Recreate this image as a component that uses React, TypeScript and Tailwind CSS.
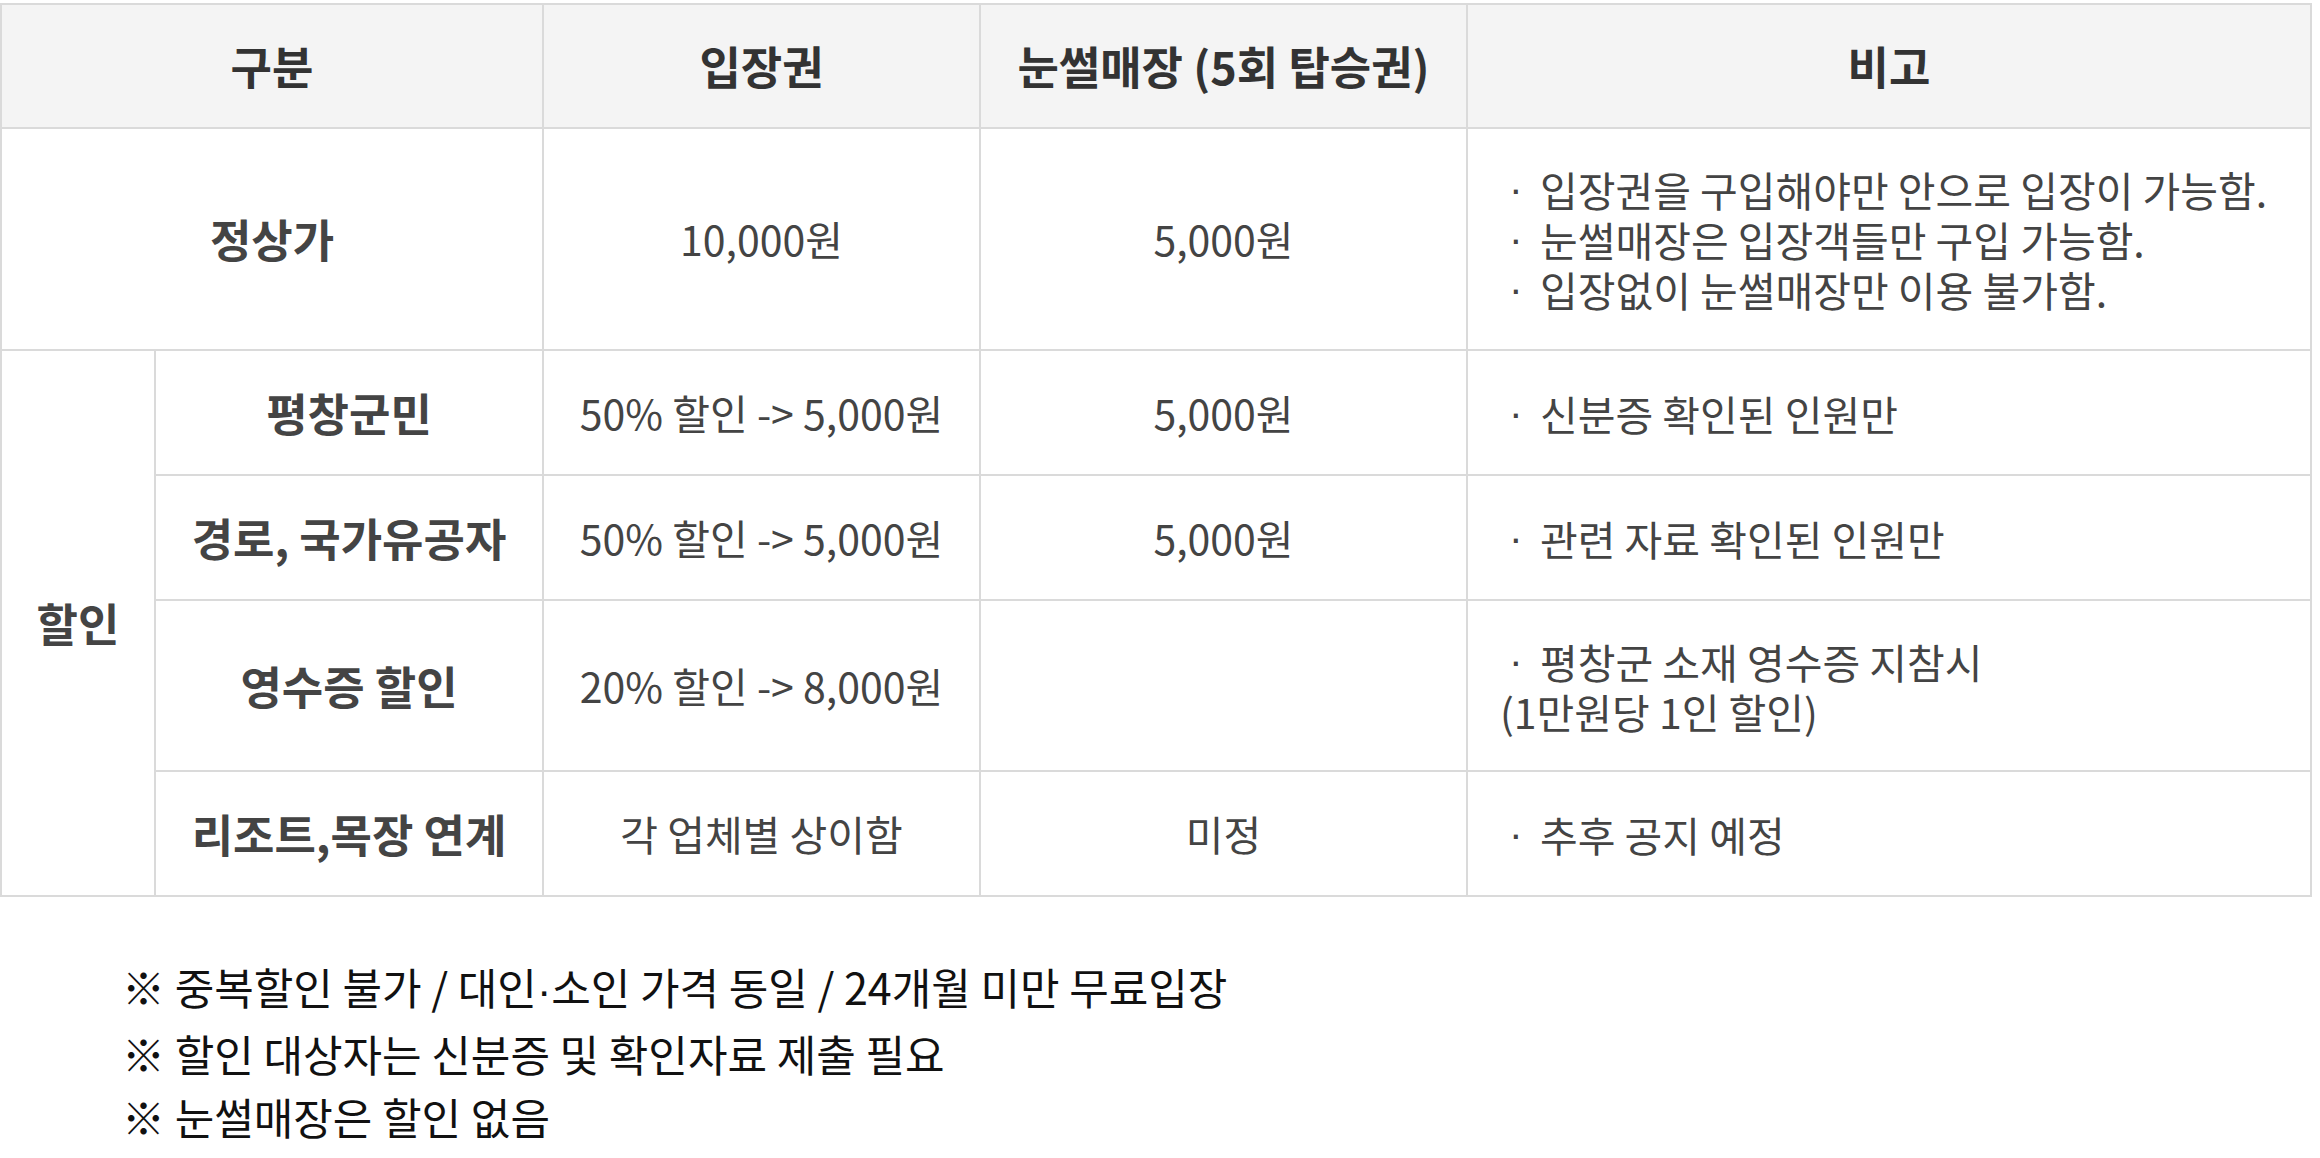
const cell = "bg-white flex items-center justify-center text-center";
const label = `${cell} font-bold text-[45px] text-[#444]`;
const body = `${cell} text-[41px] text-[#444]`;
const head = "flex items-center justify-center bg-[#f4f4f4] text-[45px] font-bold text-[#333]";
const remark = "bg-white flex flex-col justify-center pl-[32px] text-[41px] leading-[50px] text-[#444]";

function Line({ children, bullet = true }: { children: React.ReactNode; bullet?: boolean }) {
  return (
    <div className="flex whitespace-nowrap">
      {bullet && <span className="inline-block w-[40px] shrink-0 pl-[9px] font-['Liberation_Sans']">·</span>}
      <span>{children}</span>
    </div>
  );
}

export default function App() {
  return (
    <div className="min-h-screen bg-white font-['Noto_Sans_CJK_KR','Noto_Sans_CJK_SC',sans-serif]">
      <div className="mt-[3px] grid w-max grid-cols-[152px_386px_435px_485px_842px] grid-rows-[122px_220px_123px_123px_169px_123px] gap-[2px] bg-[#dadada] p-[2px]">
        {/* Header */}
        <div className={`col-span-2 ${head}`}>구분</div>
        <div className={head}>입장권</div>
        <div className={head}>눈썰매장 (5회 탑승권)</div>
        <div className={head}>비고</div>

        {/* 정상가 */}
        <div className={`col-span-2 ${label}`}>정상가</div>
        <div className={body}>10,000원</div>
        <div className={body}>5,000원</div>
        <div className={remark}>
          <Line>입장권을 구입해야만 안으로 입장이 가능함.</Line>
          <Line>눈썰매장은 입장객들만 구입 가능함.</Line>
          <Line>입장없이 눈썰매장만 이용 불가함.</Line>
        </div>

        {/* 할인 */}
        <div className={`row-span-4 ${label}`}>할인</div>
        <div className={label}>평창군민</div>
        <div className={body}>50% 할인 -&gt; 5,000원</div>
        <div className={body}>5,000원</div>
        <div className={remark}>
          <Line>신분증 확인된 인원만</Line>
        </div>

        <div className={label}>경로, 국가유공자</div>
        <div className={body}>50% 할인 -&gt; 5,000원</div>
        <div className={body}>5,000원</div>
        <div className={remark}>
          <Line>관련 자료 확인된 인원만</Line>
        </div>

        <div className={label}>영수증 할인</div>
        <div className={body}>20% 할인 -&gt; 8,000원</div>
        <div className={body}></div>
        <div className={remark}>
          <Line>평창군 소재 영수증 지참시</Line>
          <Line bullet={false}>(1만원당 1인 할인)</Line>
        </div>

        <div className={label}>리조트,목장 연계</div>
        <div className={body}>각 업체별 상이함</div>
        <div className={body}>미정</div>
        <div className={remark}>
          <Line>추후 공지 예정</Line>
        </div>
      </div>

      {/* Notes */}
      <div className="mt-[58px] pl-[122px] text-[43px] leading-[63px] text-[#111]">
        <p>
          ※ 중복할인 불가 / 대인<span className="font-['Liberation_Sans']">·</span>소인 가격 동일 / 24개월 미만 무료입장
        </p>
        <p>※ 할인 대상자는 신분증 및 확인자료 제출 필요</p>
        <p>※ 눈썰매장은 할인 없음</p>
      </div>
    </div>
  );
}
